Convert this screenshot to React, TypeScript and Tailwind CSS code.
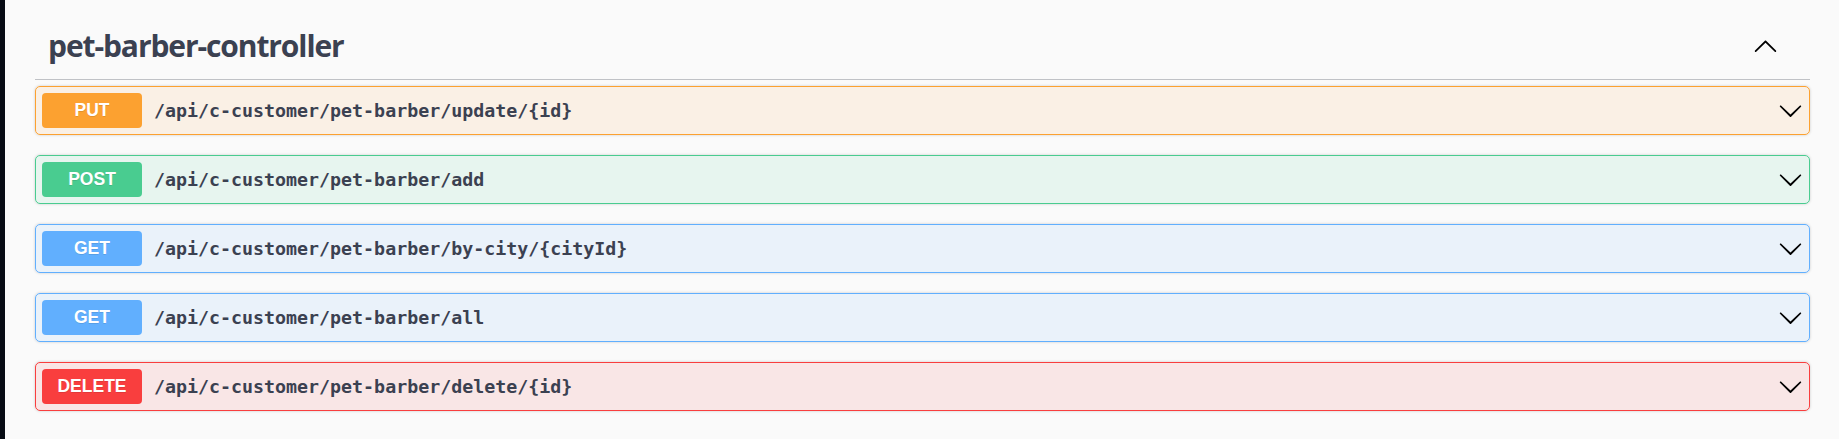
import React from "react";

const rows = [
  { m: "PUT", path: "/api/c-customer/pet-barber/update/{id}", badge: "bg-[#fca130]", row: "bg-[#fca130]/10 border-[#fca130]" },
  { m: "POST", path: "/api/c-customer/pet-barber/add", badge: "bg-[#49cc90]", row: "bg-[#49cc90]/10 border-[#49cc90]" },
  { m: "GET", path: "/api/c-customer/pet-barber/by-city/{cityId}", badge: "bg-[#61affe]", row: "bg-[#61affe]/10 border-[#61affe]" },
  { m: "GET", path: "/api/c-customer/pet-barber/all", badge: "bg-[#61affe]", row: "bg-[#61affe]/10 border-[#61affe]" },
  { m: "DELETE", path: "/api/c-customer/pet-barber/delete/{id}", badge: "bg-[#f93e3e]", row: "bg-[#f93e3e]/10 border-[#f93e3e]" },
];

function ChevronDown() {
  return (
    <svg width="25" height="25" viewBox="0 0 20 20" className="shrink-0">
      <path
        fill="#000"
        d="M17.418 6.109c.272-.268.709-.268.979 0s.271.701 0 .969l-7.908 7.83c-.27.268-.707.268-.979 0l-7.908-7.83c-.27-.268-.27-.701 0-.969.271-.268.709-.268.979 0L10 13.25l7.418-7.141z"
      />
    </svg>
  );
}

function ChevronUp() {
  return (
    <svg width="25" height="25" viewBox="0 0 20 20" className="shrink-0 -mt-[2px]">
      <path
        fill="#000"
        d="M17.418 14.908c.272.268.709.268.979 0s.271-.701 0-.969l-7.908-7.83c-.27-.268-.707-.268-.979 0l-7.908 7.83c-.27.268-.27.701 0 .969.271.268.709.268.979 0L10 7.767l7.418 7.141z"
      />
    </svg>
  );
}

export default function App() {
  return (
    <div className="flex h-[439px] w-full bg-[#fafafa]">
      <div className="w-[5px] shrink-0 bg-[#070b14]" />
      <div className="flex-1 pl-[30px] pr-[29px]">
        <div className="flex h-[80px] items-start border-b border-[#3b4151]/30 pl-[13px] pr-[32px] pt-[26px]">
          <h4 className="flex-1 text-[30px] font-bold leading-[40px] tracking-[-1.1px] text-[#3b4151] [font-family:'Open_Sans',sans-serif]">
            pet-barber-controller
          </h4>
          <div className="flex h-[40px] items-center">
            <ChevronUp />
          </div>
        </div>
        <div className="mt-[6px] flex flex-col gap-[20px]">
          {rows.map((r, i) => (
            <div
              key={i}
              className={`flex h-[49px] items-center rounded-[5px] border pl-[6px] pr-[6px] shadow-[0_0_3px_rgba(0,0,0,0.19)] ${r.row}`}
            >
              <div
                className={`flex h-[35px] w-[100px] shrink-0 items-center justify-center rounded-[4px] text-[17.5px] font-bold text-white [text-shadow:0_1px_0_rgba(0,0,0,0.1)] [font-family:'Liberation_Sans',Arial,sans-serif] ${r.badge}`}
              >
                {r.m}
              </div>
              <div className="ml-[12px] flex-1 text-[18.3px] font-bold text-[#3b4151] [font-family:'DejaVu_Sans_Mono',monospace]">
                {r.path}
              </div>
              <ChevronDown />
            </div>
          ))}
        </div>
      </div>
    </div>
  );
}
